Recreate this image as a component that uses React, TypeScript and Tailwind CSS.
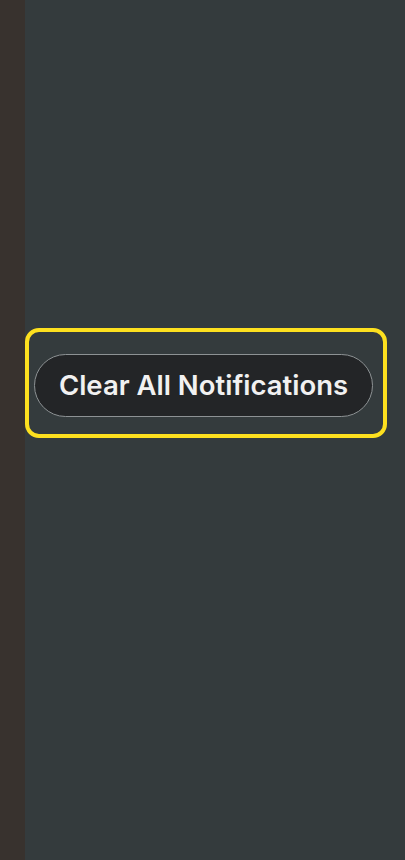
export default function App() {
  return (
    <div className="flex h-[860px] w-[405px] bg-[#343b3d]" style={{ fontFamily: "Inter, 'Noto Sans', sans-serif" }}>
      <div className="h-full w-[25px] shrink-0 bg-[#38322e]" />
      <div className="flex-1 pt-[328px] pr-[18px]">
        <div className="rounded-[14px] border-4 border-[#fde01f] pt-[22px] pb-[17px] pl-[5px] pr-[10px]">
          <button className="flex h-[63px] w-[339px] items-center justify-center rounded-full border border-[#8d9294] bg-[#232527] text-[27.5px] font-semibold text-[#f1f1f1]">
            Clear All Notifications
          </button>
        </div>
      </div>
    </div>
  );
}
